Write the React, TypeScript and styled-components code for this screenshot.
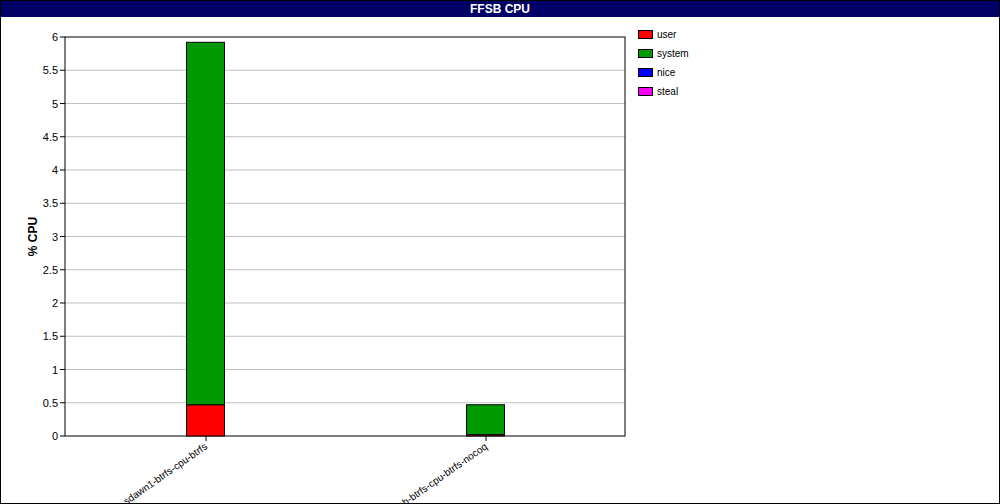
import React from "react";
import styled, { createGlobalStyle } from "styled-components";

const Global = createGlobalStyle`
  html, body { margin: 0; padding: 0; background: #fff; }
  * { box-sizing: border-box; }
`;

const Frame = styled.div`
  width: 1000px; height: 504px; border: 1px solid #000;
  display: flex; flex-direction: column; font-family: "Liberation Sans", Arial, sans-serif;
  overflow: hidden;
`;
const Title = styled.div`
  height: 16px; background: #000066; color: #fff; font-weight: bold; font-size: 12px;
  display: flex; align-items: center; justify-content: center; flex: none;
`;
const Body = styled.div`display: flex; flex: 1;`;
const Legend = styled.div`
  display: flex; flex-direction: column; gap: 6px; padding: 11px 0 0 7px;
`;
const Item = styled.div`display: flex; align-items: center; gap: 4px; font-size: 10px; height: 13px;`;
const Swatch = styled.span<{ $c: string }>`
  width: 15px; height: 9px; border: 1px solid #000; background: ${p => p.$c};
`;

const y = (v: number) => 435 - v * (399 / 6) - 16;
const ticks = Array.from({ length: 13 }, (_, i) => i * 0.5);

export default function App() {
  return (
    <>
      <Global />
      <Frame>
        <Title>FFSB CPU</Title>
        <Body>
          <svg width={630} height={486} style={{ flex: "none" }} fontFamily="Liberation Sans, Arial, sans-serif">
            {ticks.map(t => (
              <g key={t}>
                {t > 0 && t < 6 && <line x1={64} x2={624} y1={y(t)} y2={y(t)} stroke="#c0c0c0" />}
                <line x1={59} x2={64} y1={y(t)} y2={y(t)} stroke="#000" />
                <text x={57} y={y(t) + 4} fontSize={11} textAnchor="end">{t}</text>
              </g>
            ))}
            <rect x={64} y={y(6)} width={560} height={399} fill="none" stroke="#000" />
            <rect x={185.5} y={y(0.47)} width={38} height={y(0) - y(0.47)} fill="#ff0000" stroke="#000" />
            <rect x={185.5} y={y(5.92)} width={38} height={y(0.47) - y(5.92)} fill="#009900" stroke="#000" />
            <rect x={465.5} y={y(0.02)} width={38} height={y(0) - y(0.02)} fill="#ff0000" stroke="#000" />
            <rect x={465.5} y={y(0.47)} width={38} height={y(0.02) - y(0.47)} fill="#009900" stroke="#000" />
            <line x1={205} x2={205} y1={y(0)} y2={y(0) + 5} stroke="#000" />
            <line x1={485} x2={485} y1={y(0)} y2={y(0) + 5} stroke="#000" />
            <text transform={`translate(207 ${y(0) + 12}) rotate(-35)`} fontSize={10} textAnchor="end">ffsb-sdawn1-btrfs-cpu-btrfs</text>
            <text transform={`translate(487 ${y(0) + 12}) rotate(-35)`} fontSize={10} textAnchor="end">ffsb-btrfs-cpu-btrfs-nocoq</text>
            <text transform={`translate(36 ${y(3)}) rotate(-90)`} fontSize={12} fontWeight="bold" textAnchor="middle">% CPU</text>
          </svg>
          <Legend>
            <Item><Swatch $c="#ff0000" />user</Item>
            <Item><Swatch $c="#009900" />system</Item>
            <Item><Swatch $c="#0000ff" />nice</Item>
            <Item><Swatch $c="#ff00ff" />steal</Item>
          </Legend>
        </Body>
      </Frame>
    </>
  );
}
